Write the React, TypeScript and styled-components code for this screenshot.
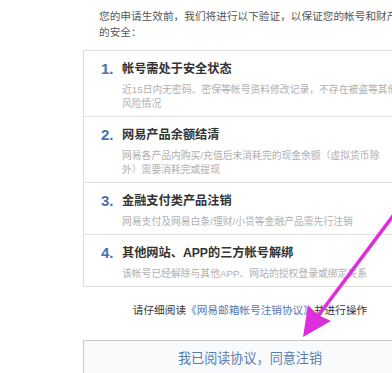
import styled, { createGlobalStyle } from 'styled-components';

const TEXT_DARK = '#333';
const TEXT_GREY = '#555';
const TEXT_MUTED = '#b0b0b0';
const BLUE = '#4a70b2';
const LINE = '#e3e3e3';
const ARROW = '#dc2edc';

const GlobalStyle = createGlobalStyle`
  html, body {
    margin: 0;
    padding: 0;
    background: #fff;
    overflow: hidden;
  }
  body {
    font-family: "Liberation Sans", "Noto Sans CJK SC", sans-serif;
  }
`;

const Page = styled.div`
  position: relative;
  width: 392px;
  height: 373px;
  overflow: hidden;
  background: #fff;
`;

const Column = styled.div`
  display: flex;
  flex-direction: column;
  width: 334px;
  margin-left: 83px;
  padding-top: 8px;
`;

const Intro = styled.p`
  margin: 0 0 10px 16px;
  width: 304px;
  font-size: 10.67px;
  line-height: 16px;
  color: ${TEXT_GREY};
`;

const Card = styled.div`
  display: flex;
  flex-direction: column;
  border: 1px solid #dcdcdc;
  background: #fff;
`;

const Step = styled.div`
  display: grid;
  grid-template-columns: 21px 1fr;
  padding: 9px 0 5px 17px;
  border-top: 1px solid ${LINE};

  &:first-child {
    border-top: none;
  }
`;

const Num = styled.span`
  font-family: "Liberation Sans", sans-serif;
  font-weight: 700;
  font-size: 15px;
  line-height: 18px;
  color: ${BLUE};
`;

const Title = styled.div`
  font-size: 12.2px;
  font-weight: 700;
  line-height: 18px;
  color: ${TEXT_DARK};
  white-space: nowrap;
`;

const Sub = styled.div`
  grid-column: 2;
  margin-top: 5px;
  font-size: 9.8px;
  line-height: 14px;
  color: ${TEXT_MUTED};
  white-space: nowrap;
`;

const Notice = styled.p`
  margin: 15px 0 0;
  text-align: center;
  font-size: 10.67px;
  line-height: 16px;
  color: ${TEXT_DARK};
`;

const Link = styled.a`
  color: #5577b0;
  text-decoration: none;
`;

const ConfirmButton = styled.button`
  margin-top: 22px;
  height: 35px;
  border: 1px solid #c4c8cc;
  background: #f8fafb;
  color: #5a7cb3;
  font-family: "Liberation Sans", "Noto Sans CJK SC", sans-serif;
  font-size: 13.1px;
  cursor: pointer;
`;

const Overlay = styled.svg`
  position: absolute;
  left: 0;
  top: 0;
  pointer-events: none;
`;

const steps = [
  {
    title: '帐号需处于安全状态',
    lines: ['近15日内无密码、密保等帐号资料修改记录，不存在被盗等其他', '风险情况'],
  },
  {
    title: '网易产品余额结清',
    lines: ['网易各产品内购买/充值后未消耗完的现金余额（虚拟货币除', '外）需要消耗完或提现'],
  },
  {
    title: '金融支付类产品注销',
    lines: ['网易支付及网易白条/理财/小贷等金融产品需先行注销'],
  },
  {
    title: '其他网站、APP的三方帐号解绑',
    lines: ['该帐号已经解除与其他APP、网站的授权登录或绑定关系'],
  },
];

export default function App() {
  return (
    <Page>
      <GlobalStyle />
      <Column>
        <Intro>您的申请生效前，我们将进行以下验证，以保证您的帐号和财产的安全：</Intro>
        <Card>
          {steps.map((s, i) => (
            <Step key={s.title}>
              <Num>{i + 1}.</Num>
              <Title>{s.title}</Title>
              <Sub>
                {s.lines.map((l, j) => (
                  <div key={j}>{l}</div>
                ))}
              </Sub>
            </Step>
          ))}
        </Card>
        <Notice>
          请仔细阅读<Link href="#">《网易邮箱帐号注销协议》</Link>并进行操作
        </Notice>
        <ConfirmButton>我已阅读协议，同意注销</ConfirmButton>
      </Column>
      <Overlay width="392" height="373" viewBox="0 0 392 373">
        <line x1="396" y1="212" x2="318" y2="316" stroke={ARROW} strokeWidth="3.6" strokeLinecap="round" />
        <path d="M303 337 L308 305 L318 315 L331 321 Z" fill={ARROW} />
      </Overlay>
    </Page>
  );
}
